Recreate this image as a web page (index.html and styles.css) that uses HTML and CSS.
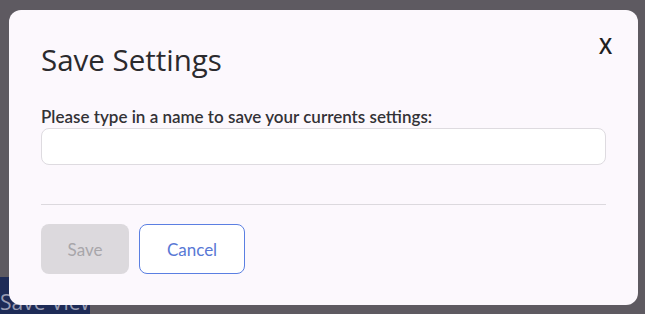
FILE: index.html
```html
<!DOCTYPE html>
<html lang="en">
<head>
    <meta charset="UTF-8">
    <meta name="viewport" content="width=device-width, initial-scale=1.0">
    <title>Save Settings</title>
    <link rel="stylesheet" href="styles.css">
</head>
<body>
    <div class="page">
        <button class="btn-view">Save View</button>
    </div>

    <!-- Save settings modal -->
    <div class="modal">
        <div class="modal-content">
            <div class="modal-header">
                <h2>Save Settings</h2>
                <button class="btn-x">X</button>
            </div>
            <label for="name">Please type in a name to save your currents settings:</label>
            <input type="text" id="name">
            <hr>
            <div class="btn-container">
                <button class="btn-save" disabled>Save</button>
                <button class="btn-cancel">Cancel</button>
            </div>
        </div>
    </div>
</body>
</html>
```

FILE: styles.css
```css
body {
    margin: 0;
    padding: 0;
    height: 100vh;
    overflow: hidden;
    font-family: Lato, "Open Sans", sans-serif;
    background-color: #5e5a61;
}
.page {
    height: 100%;
    display: flex;
    align-items: flex-end;
}
.btn-view {
    width: 90px;
    height: 37px;
    border: none;
    background-color: #1e2b57;
    color: #9a9db3;
    font-size: 21px;
    line-height: 21px;
    font-family: "Open Sans", sans-serif;
    text-align: left;
    padding: 14px 0 0 0;
    white-space: nowrap;
    overflow: hidden;
}

/* Modal */
.modal {
    position: fixed;
    left: 0;
    top: 0;
    width: 100%;
    height: 100%;
    padding: 10px 7px 9px 9px;
    box-sizing: border-box;
}
.modal-content {
    height: 100%;
    box-sizing: border-box;
    background-color: #fcf8fd;
    border-radius: 12px;
    padding: 25px 26px 0 32px;
    display: flex;
    flex-direction: column;
}
.modal-header {
    display: flex;
    justify-content: space-between;
    align-items: flex-start;
}
.modal-header h2 {
    margin: 6px 0 0 0;
    font-family: "Open Sans", sans-serif;
    font-weight: 400;
    font-size: 29.5px;
    line-height: 38px;
    color: #2b2a2d;
}
.btn-x {
    border: none;
    background: none;
    padding: 0;
    font-family: "Open Sans", sans-serif;
    font-weight: 600;
    font-size: 21px;
    line-height: 22px;
    color: #1f1f22;
    cursor: pointer;
}
label {
    margin-top: 27px;
    font-size: 17px;
    font-weight: 600;
    color: #333236;
    line-height: 22px;
}
input[type="text"] {
    margin: 0 6px 0 0;
    height: 37px;
    box-sizing: border-box;
    border: 1px solid #dedbe0;
    border-radius: 8px;
    background-color: #fff;
}
hr {
    margin: 39px 6px 0 0;
    border: none;
    border-top: 1px solid #dcd9de;
}
.btn-container {
    display: flex;
    gap: 10px;
    margin-top: 19px;
}
.btn-save, .btn-cancel {
    height: 50px;
    border-radius: 8px;
    font-family: Lato, sans-serif;
    font-size: 17px;
    cursor: pointer;
}
.btn-save {
    width: 88px;
    border: none;
    background-color: #dcd9dd;
    color: #a8a6aa;
}
.btn-cancel {
    width: 106px;
    border: 1px solid #5b7fe2;
    background-color: #fff;
    color: #5878d5;
}
```
